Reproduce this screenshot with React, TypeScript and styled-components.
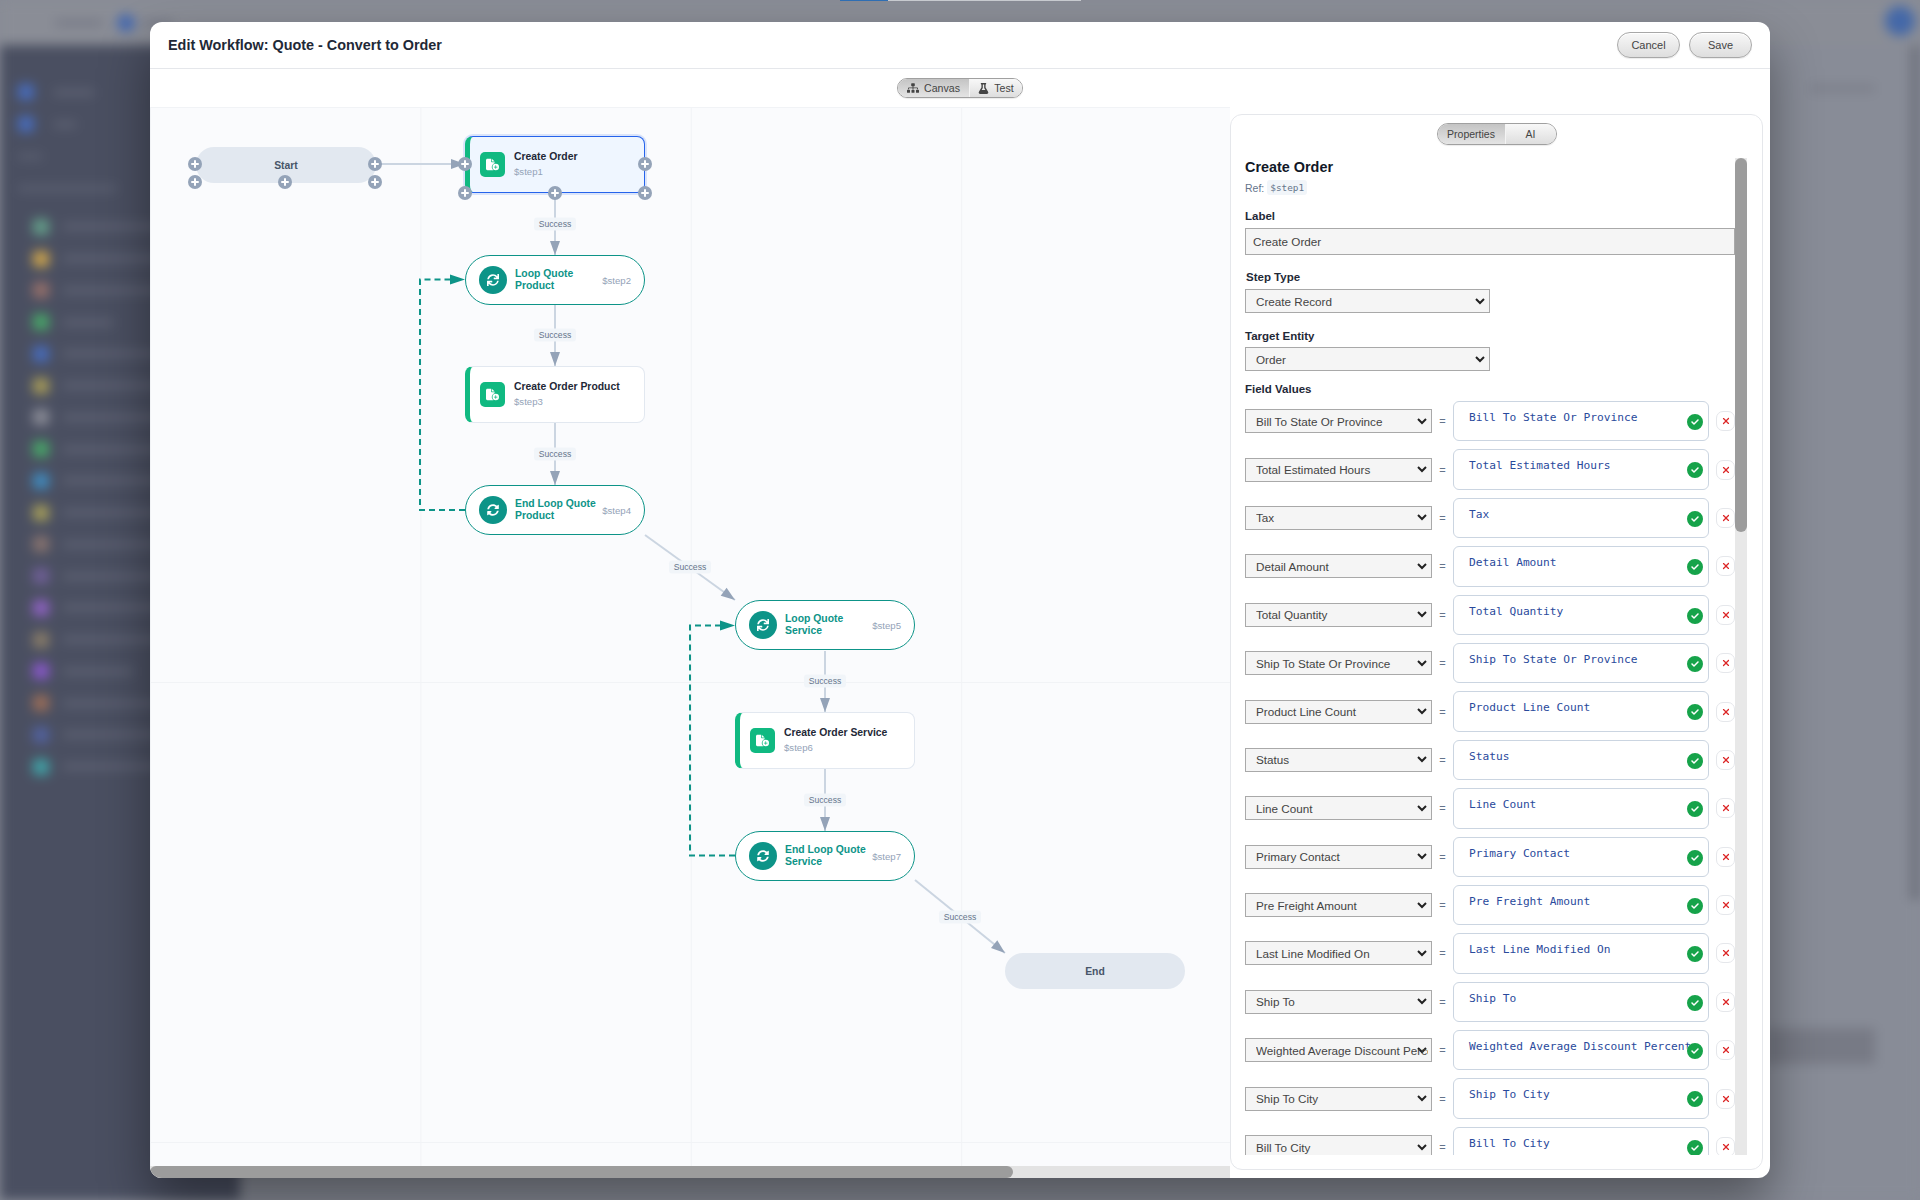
import React from "react";
import styled, { createGlobalStyle } from "styled-components";
import { FaSitemap, FaFlask, FaSync, FaSyncAlt } from "react-icons/fa";
import { FaCircleCheck, FaXmark, FaFileCirclePlus } from "react-icons/fa6";

const GlobalStyle = createGlobalStyle`
  html, body {
    margin: 0;
    padding: 0;
    background: #878b96;
  }
  * {
    box-sizing: border-box;
  }
`;

const sans = `"Liberation Sans", Arial, sans-serif`;
const mono = `"DejaVu Sans Mono", "Liberation Mono", monospace`;

const chevron = `url("data:image/svg+xml,%3Csvg xmlns='http://www.w3.org/2000/svg' width='10' height='7'%3E%3Cpath d='M1 1l4 4 4-4' fill='none' stroke='%23222' stroke-width='2'/%3E%3C/svg%3E")`;

const sideDots = [
  { color: "#64a08a", w: 130 },
  { color: "#d0a64c", w: 120 },
  { color: "#97706a", w: 125 },
  { color: "#48a868", w: 50 },
  { color: "#486cbc", w: 120 },
  { color: "#a89c58", w: 125 },
  { color: "#8b8d97", w: 125 },
  { color: "#48a868", w: 110 },
  { color: "#408cc0", w: 125 },
  { color: "#a69e5a", w: 120 },
  { color: "#89746f", w: 125 },
  { color: "#705f98", w: 110 },
  { color: "#8f62c4", w: 125 },
  { color: "#8a7d68", w: 125 },
  { color: "#8a58cc", w: 70 },
  { color: "#9c6e58", w: 125 },
  { color: "#5262a0", w: 125 },
  { color: "#40a4a8", w: 125 },
];

const fields = [
  "Bill To State Or Province",
  "Total Estimated Hours",
  "Tax",
  "Detail Amount",
  "Total Quantity",
  "Ship To State Or Province",
  "Product Line Count",
  "Status",
  "Line Count",
  "Primary Contact",
  "Pre Freight Amount",
  "Last Line Modified On",
  "Ship To",
  "Weighted Average Discount Percent",
  "Ship To City",
  "Bill To City",
];

type Pt = [number, number];

const arrowHead = (from: Pt, to: Pt, len = 14, half = 5) => {
  const dx = to[0] - from[0];
  const dy = to[1] - from[1];
  const d = Math.hypot(dx, dy);
  const ux = dx / d;
  const uy = dy / d;
  const bx = to[0] - ux * len;
  const by = to[1] - uy * len;
  return `${to[0]},${to[1]} ${bx - uy * half},${by + ux * half} ${bx + uy * half},${by - ux * half}`;
};

const edges: { from: Pt; to: Pt; label?: Pt }[] = [
  { from: [225, 57], to: [315, 57] },
  { from: [405, 86], to: [405, 148], label: [405, 117] },
  { from: [405, 197], to: [405, 259], label: [405, 228] },
  { from: [405, 316], to: [405, 378], label: [405, 347] },
  { from: [495, 428], to: [585, 493], label: [540, 460] },
  { from: [675, 544], to: [675, 605], label: [675, 574] },
  { from: [675, 661], to: [675, 724], label: [675, 693] },
  { from: [765, 773], to: [855, 846], label: [810, 810] },
];

const loops: { y1: number; y2: number; x: number; end: number }[] = [
  { y1: 403, y2: 172.5, x: 270, end: 315 },
  { y1: 748.5, y2: 518.5, x: 540, end: 585 },
];

const terminals = [
  { label: "Start", x: 46, y: 40, handles: true },
  { label: "End", x: 855, y: 846, handles: false },
];

const tasks = [
  { label: "Create Order", ref: "$step1", x: 315, y: 29, selected: true },
  { label: "Create Order Product", ref: "$step3", x: 315, y: 259, selected: false },
  { label: "Create Order Service", ref: "$step6", x: 585, y: 605, selected: false },
];

const pills = [
  { label: "Loop Quote Product", ref: "$step2", x: 315, y: 148, end: false },
  { label: "End Loop Quote Product", ref: "$step4", x: 315, y: 378, end: true },
  { label: "Loop Quote Service", ref: "$step5", x: 585, y: 493, end: false },
  { label: "End Loop Quote Service", ref: "$step7", x: 585, y: 724, end: true },
];

const startHandles: Pt[] = [
  [-1, 17],
  [-1, 35],
  [89, 35],
  [179, 17],
  [179, 35],
];

// offsets are from the padding box, the node has a 5px left border
const taskHandles: Pt[] = [
  [-5, 27],
  [-5, 56],
  [85, 56],
  [175, 27],
  [175, 56],
];

const App = () => {
  return (
    <Page>
      <GlobalStyle />
      <BlurredApp>
        <TopBar>
          <TopText $w={48} />
          <TopDot />
          <TopText $w={30} />
        </TopBar>
        <Avatar />
        <Sidebar>
          <NavRow>
            <NavDot $color="#486cbc" />
            <NavText $w={40} />
          </NavRow>
          <NavRow>
            <NavDot $color="#486cbc" />
            <NavText $w={22} />
          </NavRow>
          <SideHeading $w={24} />
          <SideHeading $w={98} />
          <SideList>
            {sideDots.map((d, i) => (
              <SideItem key={i}>
                <NavDot $color={d.color} />
                <NavText $w={d.w} />
              </SideItem>
            ))}
          </SideList>
        </Sidebar>
        <MainArea>
          <MainTitle />
          <MainAction />
        </MainArea>
        <RightStrip />
      </BlurredApp>
      <TopProgress>
        <TopProgressFill />
      </TopProgress>

      <ModalLayer>
        <Modal>
          <Header>
            <Title>Edit Workflow: Quote - Convert to Order</Title>
            <HeaderActions>
              <PillButton>Cancel</PillButton>
              <PillButton>Save</PillButton>
            </HeaderActions>
          </Header>
          <Toolbar>
            <Segmented>
              <Segment $active $width={72}>
                <FaSitemap size={12} />
                Canvas
              </Segment>
              <Segment $width={52}>
                <FaFlask size={11} />
                Test
              </Segment>
            </Segmented>
          </Toolbar>
          <Body>
            <CanvasColumn>
              <CanvasViewport>
                <Canvas>
                  <EdgeLayer width={1080} height={1059}>
                    {edges.map((e, i) => (
                      <g key={i}>
                        <line
                          x1={e.from[0]}
                          y1={e.from[1]}
                          x2={e.to[0]}
                          y2={e.to[1]}
                          stroke="#cbd5e1"
                          strokeWidth={2}
                        />
                        <polygon points={arrowHead(e.from, e.to)} fill="#94a3b8" />
                      </g>
                    ))}
                    {loops.map((l, i) => (
                      <g key={i}>
                        <path
                          d={`M${l.end} ${l.y1} H${l.x} V${l.y2} H${l.end - 10}`}
                          fill="none"
                          stroke="#0d9488"
                          strokeWidth={2}
                          strokeDasharray="6 4"
                        />
                        <polygon
                          points={arrowHead([l.x, l.y2], [l.end, l.y2], 15, 5)}
                          fill="#0d9488"
                        />
                      </g>
                    ))}
                  </EdgeLayer>

                  {edges
                    .filter((e) => e.label)
                    .map((e, i) => (
                      <EdgeLabel key={i} $x={e.label![0]} $y={e.label![1]}>
                        Success
                      </EdgeLabel>
                    ))}

                  {terminals.map((t) => (
                    <Terminal key={t.label} $x={t.x} $y={t.y}>
                      {t.label}
                      {t.handles &&
                        startHandles.map((h, i) => (
                          <Handle key={i} $x={h[0]} $y={h[1]} />
                        ))}
                    </Terminal>
                  ))}

                  {tasks.map((t) => (
                    <TaskNode key={t.ref} $x={t.x} $y={t.y} $selected={t.selected}>
                      <TaskIcon>
                        <FaFileCirclePlus size={13} />
                      </TaskIcon>
                      <TaskText>
                        <TaskLabel>{t.label}</TaskLabel>
                        <TaskRef>{t.ref}</TaskRef>
                      </TaskText>
                      {t.selected &&
                        taskHandles.map((h, i) => (
                          <Handle key={i} $x={h[0]} $y={h[1]} />
                        ))}
                    </TaskNode>
                  ))}

                  {pills.map((p) => (
                    <LoopNode key={p.ref} $x={p.x} $y={p.y}>
                      <LoopIcon>
                        {p.end ? <FaSyncAlt size={12} /> : <FaSync size={12} />}
                      </LoopIcon>
                      <LoopLabel>{p.label}</LoopLabel>
                      <LoopRef>{p.ref}</LoopRef>
                    </LoopNode>
                  ))}
                </Canvas>
              </CanvasViewport>
              <HScrollTrack>
                <HScrollThumb />
              </HScrollTrack>
            </CanvasColumn>

            <Panel>
              <PanelTabs>
                <Segmented>
                  <PanelTab $active>Properties</PanelTab>
                  <PanelTab>AI</PanelTab>
                </Segmented>
              </PanelTabs>
              <PanelBody>
                <PanelContent>
                  <PanelTitle>Create Order</PanelTitle>
                  <RefRow>
                    Ref: <RefChip>$step1</RefChip>
                  </RefRow>
                  <FieldLabel $top={14} $bottom={5}>
                    Label
                  </FieldLabel>
                  <TextInput defaultValue="Create Order" />
                  <FieldLabel $top={15} $bottom={5} $indent>
                    Step Type
                  </FieldLabel>
                  <WideSelect defaultValue="Create Record">
                    <option>Create Record</option>
                  </WideSelect>
                  <FieldLabel $top={16} $bottom={4}>
                    Target Entity
                  </FieldLabel>
                  <WideSelect defaultValue="Order">
                    <option>Order</option>
                  </WideSelect>
                  <FieldLabel $top={11} $bottom={5}>
                    Field Values
                  </FieldLabel>
                  <FieldList>
                    {fields.map((f) => (
                      <FieldRow key={f}>
                        <RowSelect defaultValue={f}>
                          <option>{f}</option>
                        </RowSelect>
                        <Equals>=</Equals>
                        <Editor>
                          <EditorText>{f}</EditorText>
                          <EditorCheck>
                            <FaCircleCheck size={16} />
                          </EditorCheck>
                        </Editor>
                        <RemoveButton>
                          <FaXmark size={10} />
                        </RemoveButton>
                      </FieldRow>
                    ))}
                  </FieldList>
                </PanelContent>
                <VScrollTrack>
                  <VScrollThumb />
                </VScrollTrack>
              </PanelBody>
            </Panel>
          </Body>
        </Modal>
      </ModalLayer>
    </Page>
  );
};

export default App;

const Page = styled.div`
  position: relative;
  width: 1920px;
  height: 1200px;
  overflow: hidden;
  background: #878b96;
  font-family: ${sans};
`;

const BlurredApp = styled.div`
  display: grid;
  grid-template-columns: 240px 1fr 10px;
  grid-template-rows: 45px 1fr;
  width: 1920px;
  height: 1200px;
  background: #888c97;
  filter: blur(6px);
`;

const TopBar = styled.div`
  grid-column: 1 / 3;
  display: flex;
  align-items: center;
  gap: 8px;
  padding-left: 55px;
  background: #8a8d96;
`;

const TopText = styled.div<{ $w: number }>`
  width: ${(p) => p.$w}px;
  height: 6px;
  background: #747784;
`;

const TopDot = styled.div`
  width: 18px;
  height: 18px;
  border-radius: 50%;
  background: #4468b0;
  margin-left: 6px;
`;

const Avatar = styled.div`
  background: #8a8d96;
  display: flex;
  align-items: center;
  justify-content: center;
  margin-left: -30px;

  &::after {
    content: "";
    width: 30px;
    height: 30px;
    border-radius: 50%;
    background: #4468a8;
    transform: translate(0, -2px);
  }
`;

const Sidebar = styled.div`
  display: flex;
  flex-direction: column;
  padding: 31px 0 0 18px;
  background: #4a4f61;
`;

const NavRow = styled.div`
  display: flex;
  align-items: center;
  gap: 20px;
  height: 32px;
`;

const NavDot = styled.div<{ $color: string }>`
  width: 16px;
  height: 16px;
  border-radius: 4px;
  background: ${(p) => p.$color};
  flex: none;
`;

const NavText = styled.div<{ $w: number }>`
  width: ${(p) => p.$w}px;
  height: 5px;
  background: #646879;
`;

const SideHeading = styled.div<{ $w: number }>`
  width: ${(p) => p.$w}px;
  height: 5px;
  background: #5f6475;
  margin: 14px 0 13px;
`;

const SideList = styled.div`
  display: flex;
  flex-direction: column;
  padding: 0 0 0 15px;
  margin-top: 7px;
`;

const SideItem = styled.div`
  display: flex;
  align-items: center;
  gap: 14px;
  height: 31.75px;
`;

const MainArea = styled.div`
  display: flex;
  flex-direction: column;
  align-items: flex-end;
  padding: 40px 35px 0 0;
`;

const MainTitle = styled.div`
  width: 65px;
  height: 7px;
  background: #7b7e89;
`;

const MainAction = styled.div`
  width: 110px;
  height: 36px;
  margin-top: 936px;
  background: #777a85;
`;

const RightStrip = styled.div`
  height: 855px;
  background: #6f727d;
`;

const TopProgress = styled.div`
  position: absolute;
  top: 0;
  left: 840px;
  width: 241px;
  height: 1px;
  background: #c9ccd1;
`;

const TopProgressFill = styled.div`
  width: 48px;
  height: 1px;
  background: #2f6fb5;
`;

const ModalLayer = styled.div`
  position: absolute;
  inset: 0;
  display: flex;
  padding: 22px 150px;
`;

const Modal = styled.div`
  flex: 1;
  min-width: 0;
  display: flex;
  flex-direction: column;
  background: #ffffff;
  border-radius: 12px;
  overflow: hidden;
  box-shadow: 0 25px 50px rgba(0, 0, 0, 0.4);
`;

const Header = styled.div`
  display: flex;
  align-items: center;
  justify-content: space-between;
  height: 47px;
  padding: 0 18px 0 18px;
  border-bottom: 1px solid #e5e7eb;
  flex: none;
`;

const Title = styled.div`
  font-size: 14.4px;
  font-weight: 700;
  color: #1f2937;
`;

const HeaderActions = styled.div`
  display: flex;
  gap: 9px;
`;

const PillButton = styled.button`
  width: 63px;
  height: 26px;
  padding: 0;
  border: 1px solid #a8a8a8;
  border-radius: 13px;
  background: linear-gradient(#f8f8f8, #dedede);
  box-shadow: inset 0 1px 0 #ffffff, 0 1px 1px rgba(0, 0, 0, 0.08);
  font-family: ${sans};
  font-size: 11px;
  color: #444444;
`;

const Toolbar = styled.div`
  display: flex;
  align-items: center;
  justify-content: center;
  height: 38px;
  flex: none;
`;

const Segmented = styled.div`
  display: inline-flex;
  border: 1px solid #a0a0a0;
  border-radius: 11px;
  overflow: hidden;
  box-shadow: 0 1px 1px rgba(0, 0, 0, 0.08);
`;

const Segment = styled.div<{ $active?: boolean; $width: number }>`
  display: flex;
  align-items: center;
  justify-content: center;
  gap: 5px;
  width: ${(p) => p.$width}px;
  height: 18px;
  font-size: 10.6px;
  color: #444444;
  background: ${(p) =>
    p.$active
      ? "linear-gradient(#c4c4c4, #e4e4e4)"
      : "linear-gradient(#f8f8f8, #dedede)"};
  border-right: ${(p) => (p.$active ? "1px solid #f4f4f4" : "none")};
`;

const Body = styled.div`
  flex: 1;
  min-height: 0;
  display: flex;
`;

const CanvasColumn = styled.div`
  display: flex;
  flex-direction: column;
  width: 1080px;
  flex: none;
`;

const CanvasViewport = styled.div`
  flex: 1;
  min-height: 0;
  overflow: hidden;
`;

const HScrollTrack = styled.div`
  height: 12px;
  flex: none;
  background: #e3e3e3;
`;

const HScrollThumb = styled.div`
  width: 863px;
  height: 100%;
  background: #9c9c9c;
  border-radius: 6px;
`;

const Canvas = styled.div`
  position: relative;
  width: 1080px;
  height: 1059px;
  background-color: #fafbfd;
  background-image: linear-gradient(to right, #f1f3f6 1px, transparent 1px),
    linear-gradient(to bottom, #f1f3f6 1px, transparent 1px);
  background-size: 270.4px 115px;
`;

const EdgeLayer = styled.svg`
  position: absolute;
  top: 0;
  left: 0;
`;

const EdgeLabel = styled.div.attrs<{ $x: number; $y: number }>((p) => ({
  style: { left: p.$x, top: p.$y },
}))<{ $x: number; $y: number }>`
  position: absolute;
  transform: translate(-50%, -50%);
  width: 42px;
  height: 13px;
  line-height: 13px;
  text-align: center;
  font-size: 8.6px;
  color: #64748b;
  background: #f1f5f9;
  border-radius: 3px;
`;

const Handle = styled.span.attrs<{ $x: number; $y: number }>((p) => ({
  style: { left: p.$x, top: p.$y },
}))<{ $x: number; $y: number }>`
  position: absolute;
  width: 14px;
  height: 14px;
  margin: -7px 0 0 -7px;
  border-radius: 50%;
  background: #94a3b8;
  z-index: 2;

  &::before,
  &::after {
    content: "";
    position: absolute;
    background: #ffffff;
    border-radius: 1px;
  }
  &::before {
    left: 3px;
    top: 6px;
    width: 8px;
    height: 2px;
  }
  &::after {
    left: 6px;
    top: 3px;
    width: 2px;
    height: 8px;
  }
`;

const Terminal = styled.div.attrs<{ $x: number; $y: number }>((p) => ({
  style: { left: p.$x, top: p.$y },
}))<{ $x: number; $y: number }>`
  position: absolute;
  display: flex;
  align-items: center;
  justify-content: center;
  width: 180px;
  height: 36px;
  border-radius: 18px;
  background: #e2e8f0;
  font-size: 10.4px;
  font-weight: 700;
  color: #475569;
`;

const TaskNode = styled.div.attrs<{ $x: number; $y: number }>((p) => ({
  style: { left: p.$x, top: p.$y },
}))<{ $x: number; $y: number; $selected?: boolean }>`
  position: absolute;
  display: flex;
  align-items: center;
  gap: 9px;
  width: 180px;
  height: 57px;
  padding-left: 10px;
  border: 1px solid ${(p) => (p.$selected ? "#2563eb" : "#e2e8f0")};
  border-left: 5px solid #10b981;
  border-radius: 8px;
  background: ${(p) => (p.$selected ? "#eff6ff" : "#ffffff")};
  box-shadow: ${(p) =>
    p.$selected ? "0 0 0 2px rgba(37, 99, 235, 0.15)" : "none"};
`;

const TaskIcon = styled.div`
  display: flex;
  align-items: center;
  justify-content: center;
  width: 25px;
  height: 25px;
  flex: none;
  border-radius: 5px;
  background: #10b981;
  color: #ffffff;
`;

const TaskText = styled.div`
  display: flex;
  flex-direction: column;
  gap: 3px;
`;

const TaskLabel = styled.div`
  font-size: 10.4px;
  line-height: 12px;
  font-weight: 700;
  color: #1f2937;
  white-space: nowrap;
`;

const TaskRef = styled.div`
  font-size: 9.6px;
  line-height: 12px;
  color: #94a3b8;
`;

const LoopNode = styled.div.attrs<{ $x: number; $y: number }>((p) => ({
  style: { left: p.$x, top: p.$y },
}))<{ $x: number; $y: number }>`
  position: absolute;
  display: flex;
  align-items: center;
  width: 180px;
  height: 50px;
  padding: 0 13px;
  border: 1.5px solid #0d9488;
  border-radius: 25px;
  background: #ffffff;
`;

const LoopIcon = styled.div`
  display: flex;
  align-items: center;
  justify-content: center;
  width: 28px;
  height: 28px;
  flex: none;
  border-radius: 50%;
  background: #0d9488;
  color: #ffffff;
`;

const LoopLabel = styled.div`
  flex: 1;
  min-width: 0;
  margin-left: 8px;
  font-size: 10.4px;
  line-height: 12.5px;
  font-weight: 700;
  color: #0d9488;
`;

const LoopRef = styled.div`
  flex: none;
  margin-left: 4px;
  font-size: 9.6px;
  color: #94a3b8;
`;

const Panel = styled.div`
  flex: 1;
  min-width: 0;
  display: flex;
  flex-direction: column;
  margin: 7px 7px 8px 0;
  border: 1px solid #e5e7eb;
  border-radius: 12px;
  background: #ffffff;
`;

const PanelTabs = styled.div`
  display: flex;
  justify-content: center;
  padding-top: 8px;
  flex: none;
`;

const PanelTab = styled.div<{ $active?: boolean }>`
  display: flex;
  align-items: center;
  justify-content: center;
  width: ${(p) => (p.$active ? "68px" : "50px")};
  height: 20px;
  font-size: 10.5px;
  color: #444444;
  background: ${(p) =>
    p.$active
      ? "linear-gradient(#c4c4c4, #e4e4e4)"
      : "linear-gradient(#f8f8f8, #dedede)"};
  border-right: ${(p) => (p.$active ? "1px solid #f4f4f4" : "none")};
`;

const PanelBody = styled.div`
  flex: 1;
  min-height: 0;
  display: flex;
  margin: 13px 15px 14px 0;
`;

const PanelContent = styled.div`
  flex: 1;
  min-width: 0;
  display: flex;
  flex-direction: column;
  align-items: flex-start;
  padding-left: 14px;
  overflow: hidden;
`;

const VScrollTrack = styled.div`
  width: 12px;
  flex: none;
  background: #e8e8e8;
`;

const VScrollThumb = styled.div`
  width: 100%;
  height: 374px;
  background: #9c9c9c;
  border-radius: 6px;
`;

const PanelTitle = styled.div`
  font-size: 14.4px;
  line-height: 18px;
  font-weight: 700;
  color: #111827;
  flex: none;
`;

const RefRow = styled.div`
  display: flex;
  align-items: center;
  gap: 3px;
  height: 15px;
  margin-top: 4px;
  flex: none;
  font-size: 10.5px;
  color: #64748b;
`;

const RefChip = styled.code`
  display: inline-block;
  padding: 0 3px;
  height: 15px;
  line-height: 15px;
  font-family: ${mono};
  font-size: 9.4px;
  color: #64748b;
  background: #f1f5f9;
  border-radius: 3px;
`;

const FieldLabel = styled.div<{ $top: number; $bottom: number; $indent?: boolean }>`
  margin: ${(p) => p.$top}px 0 ${(p) => p.$bottom}px ${(p) => (p.$indent ? "1px" : "0")};
  flex: none;
  font-size: 11.5px;
  line-height: 14px;
  font-weight: 700;
  color: #1f2937;
`;

const TextInput = styled.input`
  width: 490px;
  height: 27px;
  flex: none;
  padding: 0 7px;
  border: 1px solid #a9a9a9;
  border-radius: 0;
  background: #f5f5f5;
  font-family: ${sans};
  font-size: 11.7px;
  color: #444444;
  outline: none;
`;

const WideSelect = styled.select`
  appearance: none;
  width: 245px;
  height: 24px;
  flex: none;
  padding: 0 3px 0 10px;
  border: 1px solid #a9a9a9;
  border-radius: 0;
  background: #f5f5f5 ${chevron} no-repeat right 4px center;
  font-family: ${sans};
  font-size: 11.7px;
  color: #444444;
`;

const FieldList = styled.div`
  display: flex;
  flex-direction: column;
  gap: 8px;
  width: 490px;
  flex: none;
`;

const FieldRow = styled.div`
  display: flex;
  align-items: center;
  height: 40.4px;
`;

const RowSelect = styled(WideSelect)`
  width: 187px;
`;

const Equals = styled.div`
  width: 21px;
  flex: none;
  text-align: center;
  font-size: 11px;
  color: #64748b;
`;

const Editor = styled.div`
  position: relative;
  flex: 1;
  min-width: 0;
  height: 100%;
  padding: 9px 15px 0;
  border: 1px solid #cbd5e1;
  border-radius: 6px;
  background: #ffffff;
`;

const EditorText = styled.div`
  font-family: ${mono};
  font-size: 11.2px;
  line-height: 14px;
  color: #2a4a9c;
  white-space: nowrap;
`;

const EditorCheck = styled.span`
  position: absolute;
  top: 12px;
  right: 5px;
  display: flex;
  color: #16a34a;
  background: #ffffff;
  border-radius: 50%;
`;

const RemoveButton = styled.div`
  display: flex;
  align-items: center;
  justify-content: center;
  width: 19px;
  height: 20px;
  margin-left: 7px;
  flex: none;
  border: 1px solid #e5e7eb;
  border-radius: 7px;
  background: #ffffff;
  color: #dc2626;
`;
